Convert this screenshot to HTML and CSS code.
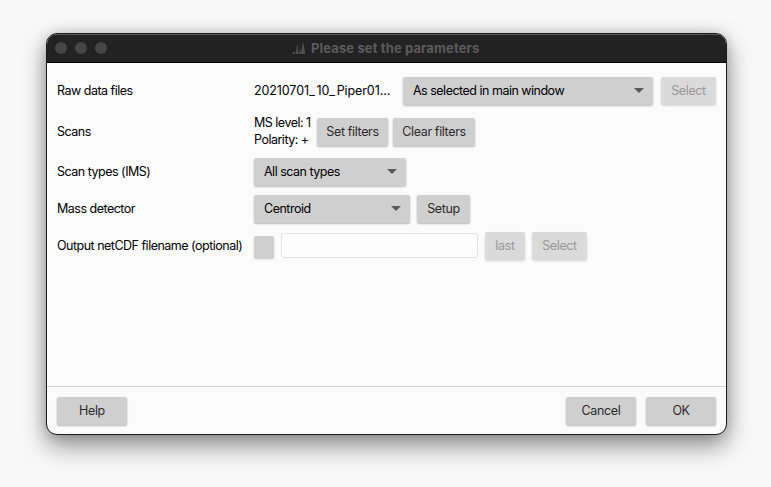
FILE: index.html
```html
<!DOCTYPE html>
<html lang="en">
<head>
<meta charset="utf-8">
<title>Please set the parameters</title>
<link rel="stylesheet" href="styles.css">
</head>
<body>
<main class="window">
  <header class="titlebar">
    <div class="lights"><i></i><i></i><i></i></div>
    <svg class="logo" width="14" height="14" viewBox="0 0 14 14"><path d="M0 13 2.8 10 3.3 13zM3.8 13 5.2 3 6.8 13zM7 13 8.3 7 9 13zM8.8 13 11 0.5 13.3 13z"/></svg>
    <h1>Please set the parameters</h1>
  </header>
  <form class="params">
    <div class="row">
      <label>Raw data files</label>
      <span class="file">20210701<u>_</u>10<u>_</u>Piper01...</span>
      <div class="select wide"><span>As selected in main window</span><b></b></div>
      <button type="button" class="browse" disabled>Select</button>
    </div>
    <div class="row tall">
      <label>Scans</label>
      <span class="scans">MS level: 1<br>Polarity: +</span>
      <button type="button" class="filter">Set filters</button>
      <button type="button" class="clear">Clear filters</button>
    </div>
    <div class="row">
      <label>Scan types (IMS)</label>
      <div class="select types"><span>All scan types</span><b></b></div>
    </div>
    <div class="row">
      <label>Mass detector</label>
      <div class="select detector"><span>Centroid</span><b></b></div>
      <button type="button" class="setup">Setup</button>
    </div>
    <div class="row">
      <label>Output netCDF filename (optional)</label>
      <span class="check"></span>
      <input class="name" type="text" aria-label="Filename">
      <button type="button" class="last" disabled>last</button>
      <button type="button" class="pick" disabled>Select</button>
    </div>
  </form>
  <footer class="actions">
    <button type="button">Help</button>
    <button type="button" class="cancel">Cancel</button>
    <button type="button">OK</button>
  </footer>
</main>
</body>
</html>
```
FILE: styles.css
```css
* { box-sizing: border-box; }
body {
  margin: 0;
  height: 487px;
  overflow: hidden;
  padding: 33px 0 0 46px;
  background: #f8f8f8;
  font: 12.5px/17px Inter, "Liberation Sans", sans-serif;
  letter-spacing: -0.5px;
  color: #000;
}
.window {
  width: 681px;
  height: 402px;
  display: flex;
  flex-direction: column;
  border: 1px solid #1a1a1a;
  border-radius: 11px;
  overflow: hidden;
  background: #fbfbfb;
  box-shadow: 0 11px 24px rgba(0, 0, 0, .42), 0 0 14px rgba(0, 0, 0, .16);
}
.titlebar {
  height: 29px;
  flex: none;
  display: flex;
  align-items: center;
  background: #222;
  border-bottom: 1px solid #000;
  box-shadow: inset 0 1px #585858;
}
.lights { display: flex; gap: 8px; padding-left: 8px; width: 245px; }
.lights i { width: 12px; height: 12px; border-radius: 50%; background: #464646; }
.logo { fill: #505050; flex: none; }
h1 {
  margin: 0 0 0 5px;
  font-size: 13px;
  line-height: 17px;
  font-weight: 700;
  letter-spacing: 0.13px;
  color: #5c5c5c;
  white-space: nowrap;
}
.params {
  flex: 1;
  display: flex;
  flex-direction: column;
  gap: 9px;
  padding: 14px 10px 0;
}
.row { display: flex; align-items: center; height: 28px; white-space: nowrap; }
.row.tall { height: 36px; margin-bottom: -1px; }
label { width: 197px; flex: none; padding-bottom: 2px; }
.file { width: 149px; padding-bottom: 2px; letter-spacing: -0.1px; }
.file u { display: inline-block; width: 7.5px; text-decoration: none; }
.scans { width: 63px; padding-bottom: 2px; }
.select {
  height: 28px;
  display: flex;
  align-items: center;
  justify-content: space-between;
  padding: 0 9px 2px 10px;
  background: #cfcfcf;
  border-radius: 2px;
  box-shadow: 0 1px 2px rgba(0, 0, 0, .28);
}
.select b { border: 5px solid transparent; border-top-color: #5a5a5a; border-bottom: 0; }
.wide { width: 250px; }
.types { width: 152px; }
.detector { width: 156px; }
button {
  height: 28px;
  padding: 0 0 2px;
  border: 0;
  border-radius: 2px;
  background: #cfcfcf;
  box-shadow: 0 1px 2px rgba(0, 0, 0, .28);
  font: inherit;
  letter-spacing: -0.37px;
  color: #2b2b2b;
}
button:disabled { background: #dadada; color: #989898; box-shadow: 0 1px 2px rgba(0, 0, 0, .15); }
.browse { width: 55px; margin-left: 8px; }
.filter { width: 71px; }
.clear { width: 82px; margin-left: 5px; }
.setup { width: 53px; margin-left: 7px; }
.check { width: 20px; height: 22px; margin-top: 1px; background: #cfcfcf; border-radius: 2px; box-shadow: 0 1px 2px rgba(0, 0, 0, .22); }
.name { width: 197px; height: 25px; margin: 0 0 1px 7px; border: 1px solid #e2e2e2; border-radius: 3px; background: #fdfdfd; }
.last { width: 40px; margin-left: 7px; }
.pick { width: 55px; margin-left: 7px; }
.actions {
  height: 48px;
  flex: none;
  display: flex;
  gap: 10px;
  padding: 10px 10px 0;
  border-top: 1px solid #d0d0d0;
}
.actions button { width: 70px; }
.cancel { margin-left: auto; }
```
